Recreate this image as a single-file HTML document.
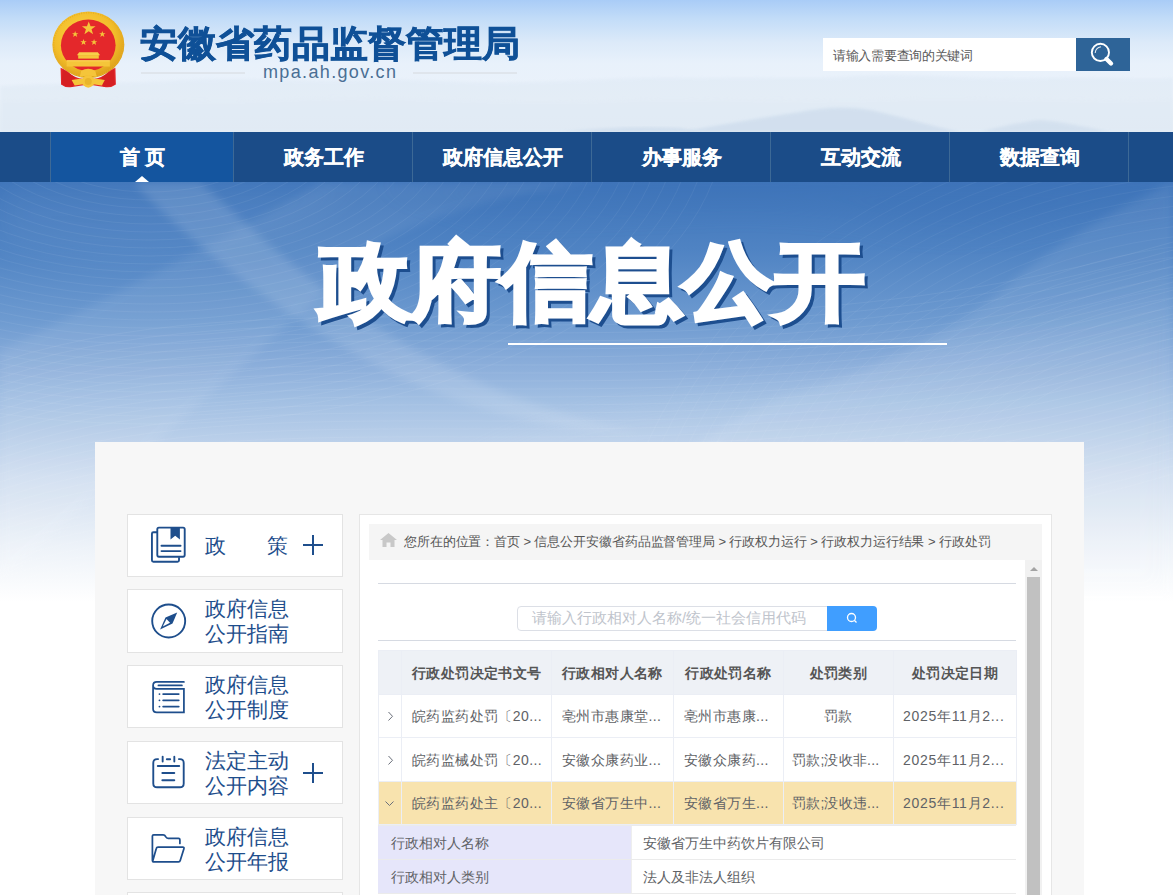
<!DOCTYPE html>
<html><head><meta charset="utf-8">
<style>
*{margin:0;padding:0;box-sizing:border-box;}
html,body{width:1173px;height:895px;overflow:hidden;font-family:"Liberation Sans",sans-serif;}
body{position:relative;background:#fff;}
.abs{position:absolute;}
#header{left:0;top:0;width:1173px;height:132px;background:linear-gradient(180deg,#a9ccf7 0%,#c2dcf8 14%,#dceaf9 32%,#e8f1fb 48%,#ebf2fa 75%,#e8f0f8 100%);overflow:hidden;}
#title{left:140px;top:19px;font-size:38px;font-weight:bold;color:#0f5097;-webkit-text-stroke:0.8px #0f5097;transform-origin:0 0;transform:scaleY(0.95);white-space:nowrap;line-height:52px;}
#domain{left:263px;top:61px;font-size:18px;color:#4a6f94;letter-spacing:1.35px;line-height:22px;}
.hl{position:absolute;top:72px;height:2px;background:#dfe5ec;}
#search{left:823px;top:38px;width:253px;height:33px;background:#fff;font-size:13px;color:#5a5a5a;line-height:35px;padding-left:10px;letter-spacing:-0.3px;}
#sbtn{left:1076px;top:38px;width:54px;height:33px;background:#2e6498;}
#nav{left:0;top:132px;width:1173px;height:50px;background:#1b4c88;}
.nv{position:absolute;top:0;width:179px;height:50px;line-height:50px;text-align:center;color:#fff;font-weight:bold;font-size:20px;-webkit-text-stroke:0.3px #fff;padding-left:2px;}
.dv{position:absolute;top:0;width:1px;height:50px;background:#3d6996;}
#banner{left:0;top:182px;width:1173px;height:420px;overflow:hidden;}
#bigtitle,#bigshadow{left:319px;top:227px;font-size:85px;font-weight:bold;color:#fff;-webkit-text-stroke:3.5px #fff;white-space:nowrap;line-height:110px;transform-origin:0 0;transform:scaleX(1.07);}
#bigshadow{color:#1d4e8f;-webkit-text-stroke:3.5px #1d4e8f;transform:translate(3px,3px) scaleX(1.07);}
#bline{left:508px;top:343px;width:439px;height:2px;background:#fff;}
#content{left:95px;top:442px;width:989px;height:453px;background:#f7f7f7;}
.side{position:absolute;left:127px;width:216px;height:63px;background:#fff;border:1px solid #e3e3e3;color:#1e4e8c;font-size:21px;line-height:25px;}
.side svg{position:absolute;left:12px;top:0;}
.side .t{position:absolute;left:77px;white-space:nowrap;}
.side .plus{position:absolute;left:175px;width:20px;height:20px;}
.side .plus:before{content:"";position:absolute;left:0;top:9px;width:20px;height:2px;background:#1e4e8c;}
.side .plus:after{content:"";position:absolute;left:9px;top:0;width:2px;height:20px;background:#1e4e8c;}
#panel{left:359px;top:514px;width:693px;height:381px;background:#fff;border:1px solid #e6e6e6;border-bottom:none;}
#crumb{left:369px;top:524px;width:673px;height:36px;background:#f5f5f5;font-size:13px;color:#555;line-height:36px;white-space:nowrap;letter-spacing:-0.11px;}
#scroll{left:1025px;top:560px;width:17px;height:335px;background:#f1f1f1;}
#thumb{left:1027px;top:577px;width:13px;height:318px;background:#c1c1c1;}
.hr{position:absolute;left:378px;width:638px;height:1px;background:#d6dae2;}
#sinput{left:517px;top:606px;width:311px;height:25px;border:1px solid #dcdfe6;border-radius:4px 0 0 4px;font-size:14.5px;color:#c0c4cc;line-height:23px;padding-left:14px;white-space:nowrap;}
#sgo{left:827px;top:606px;width:50px;height:25px;background:#409eff;border-radius:0 4px 4px 0;}
table{position:absolute;left:378px;top:650px;border-collapse:collapse;table-layout:fixed;width:638px;font-size:14px;color:#606266;}
td,th{border:1px solid #ebeef5;height:43px;white-space:nowrap;overflow:hidden;padding:0 10px;}
th{height:44px;padding-top:3px;}
tr.r1 td{height:43px;} tr.r2 td{height:44px;} tr.r3 td{height:43px;}
td{padding-top:2px;letter-spacing:0.4px;}
td.d{letter-spacing:0.7px;padding-left:9px;}
td.k{letter-spacing:0.2px;padding-left:8px;}
th{background:#eef1f6;color:#555;font-weight:bold;text-align:center;letter-spacing:0.4px;}
tr.hi td{background:#f8e3ae;}
td.c{text-align:center;}
td.arr{padding:0;text-align:center;color:#888;}
.det{position:absolute;left:378px;width:638px;height:34px;font-size:14px;color:#606266;line-height:35px;border-top:1px solid #ebebeb;background:#fff;}
.det .l{position:absolute;left:0;top:0;width:254px;height:33px;background:#e6e6fa;padding-left:13px;border-right:1px solid #eeeeee;}
.det .v{position:absolute;left:254px;top:0;width:384px;height:33px;padding-left:11px;}
</style></head>
<body>
<div id="header" class="abs"><svg width="1173" height="132" viewBox="0 0 1173 132" style="position:absolute;left:0;top:0">
<defs><filter id="mb"><feGaussianBlur stdDeviation="1.5"/></filter></defs>
<path d="M0 86 C60 82 120 84 180 80 C240 77 300 82 360 80 C420 78 470 84 520 82 C600 80 640 76 700 78 C760 76 800 80 860 76 C920 73 980 80 1040 78 C1100 76 1140 80 1173 78 L1173 132 L0 132 Z" fill="#d3e1ef" opacity="0.28" filter="url(#mb)"/>
<path d="M0 100 C100 96 200 104 300 98 C400 94 500 104 600 100 C700 96 800 102 900 98 C1000 96 1100 102 1173 98 L1173 132 L0 132 Z" fill="#dfe9f4" opacity="0.25" filter="url(#mb)"/>
<path d="M680 132 C720 125 760 118 800 112 C820 108 845 106 870 110 C900 116 930 126 960 132 Z" fill="#cddcec" opacity="0.75" filter="url(#mb)"/>
<path d="M980 132 C1000 127 1020 122 1040 120 C1060 121 1090 128 1110 132 Z" fill="#cddcec" opacity="0.65" filter="url(#mb)"/>
<path d="M560 132 C600 128 640 126 680 128 L700 132 Z" fill="#c8d8ea" opacity="0.6" filter="url(#mb)"/>
</svg></div>
<svg class="abs" style="left:45px;top:5px" width="90" height="90" viewBox="0 0 895 895">
  <defs>
   <radialGradient id="gold" cx="0.45" cy="0.4" r="0.6"><stop offset="0" stop-color="#ffd84a"/><stop offset="0.7" stop-color="#f2bd2a"/><stop offset="1" stop-color="#dca01c"/></radialGradient>
  </defs>
  <ellipse cx="431" cy="395" rx="358" ry="330" fill="url(#gold)"/>
  <ellipse cx="431" cy="395" rx="345" ry="318" fill="none" stroke="#e8ae22" stroke-width="14" stroke-dasharray="10 14"/>
  <ellipse cx="430" cy="400" rx="272" ry="255" fill="#e4282b"/>
  <polygon points="435,165 453,212 503,212 463,242 478,292 435,262 392,292 407,242 367,212 417,212" fill="#f5c53a"/>
  <polygon points="300,258 308,280 332,280 313,294 320,318 300,304 280,318 287,294 268,280 292,280" fill="#f5c53a"/>
  <polygon points="570,258 578,280 602,280 583,294 590,318 570,304 550,318 557,294 538,280 562,280" fill="#f5c53a"/>
  <polygon points="383,338 391,360 415,360 396,374 403,398 383,384 363,398 370,374 351,360 375,360" fill="#f5c53a"/>
  <polygon points="488,338 496,360 520,360 501,374 508,398 488,384 468,398 475,374 456,360 480,360" fill="#f5c53a"/>
  <path d="M340 470 H525 L548 500 H318 Z" fill="#f7cf4a"/>
  <rect x="330" y="498" width="205" height="35" fill="#f5c53a"/>
  <rect x="215" y="550" width="430" height="62" fill="#f5c53a"/>
  <rect x="215" y="550" width="430" height="10" fill="#fbd75a"/>
  <path d="M155 625 Q200 640 260 690 Q330 740 430 735 Q530 740 600 690 Q660 640 700 625 L705 790 Q650 830 590 815 L430 790 L270 815 Q210 830 160 790 Z" fill="#e4282b"/>
  <path d="M175 640 Q240 680 300 720 L280 810 Q220 820 165 790 Z" fill="#d51f22"/>
  <path d="M685 640 Q620 680 560 720 L580 810 Q640 820 695 790 Z" fill="#d51f22"/>
  <path d="M360 655 Q430 615 500 655 L515 715 Q430 690 345 715 Z" fill="#f5c53a"/>
  <path d="M265 745 Q430 710 595 745 L565 800 Q430 770 295 800 Z" fill="#f5c53a"/>
  <circle cx="430" cy="760" r="62" fill="#f5c53a"/>
  <circle cx="430" cy="760" r="35" fill="#e9b52a"/>
</svg>
<div id="title" class="abs">安徽省药品监督管理局</div>
<div class="hl" style="left:141px;width:104px;"></div>
<div class="hl" style="left:413px;width:104px;"></div>
<div id="domain" class="abs">mpa.ah.gov.cn</div>
<div id="search" class="abs">请输入需要查询的关键词</div>
<div id="sbtn" class="abs"><svg width="54" height="33" viewBox="0 0 54 33"><circle cx="24.4" cy="14.4" r="8.6" fill="none" stroke="#fff" stroke-width="1.9"/><path d="M19.2 15 Q19.5 9.8 25 8.8" fill="none" stroke="#fff" stroke-width="1.1" opacity=".85"/><line x1="30.5" y1="21" x2="35" y2="25.5" stroke="#fff" stroke-width="4.4" stroke-linecap="round"/></svg></div>
<div id="nav" class="abs">
  <div class="nv" style="left:50px;width:183px;background:#14559f;">首 页</div>
  <div class="nv" style="left:233px;">政务工作</div>
  <div class="nv" style="left:412px;">政府信息公开</div>
  <div class="nv" style="left:591px;">办事服务</div>
  <div class="nv" style="left:770px;">互动交流</div>
  <div class="nv" style="left:949px;">数据查询</div>
  <div class="dv" style="left:50px"></div><div class="dv" style="left:233px"></div><div class="dv" style="left:412px"></div><div class="dv" style="left:591px"></div><div class="dv" style="left:770px"></div><div class="dv" style="left:949px"></div><div class="dv" style="left:1128px"></div>
</div>
<div id="banner" class="abs"><svg width="1173" height="420" viewBox="0 0 1173 420" style="position:absolute;left:0;top:0">
<defs>
<linearGradient id="bg" x1="0" y1="0" x2="0" y2="1">
<stop offset="0" stop-color="#3f75ba"/><stop offset="0.16" stop-color="#4f83c3"/><stop offset="0.326" stop-color="#6d9ad0"/><stop offset="0.42" stop-color="#87abd9"/><stop offset="0.524" stop-color="#a3c0e3"/><stop offset="0.7" stop-color="#d0def0"/><stop offset="0.874" stop-color="#eef3f9"/><stop offset="1" stop-color="#ffffff"/>
</linearGradient>
<filter id="bl" x="-20%" y="-50%" width="140%" height="200%"><feGaussianBlur stdDeviation="14"/></filter>
<filter id="bl2" x="-20%" y="-50%" width="140%" height="200%"><feGaussianBlur stdDeviation="4"/></filter>
</defs>
<rect width="1173" height="420" fill="url(#bg)"/>
<path d="M0 0 H360 C300 60 150 100 0 60 Z" fill="#ffffff" opacity="0.04" filter="url(#bl)"/>
<path d="M0 169 C100 120 200 70 323 0 L600 0 C500 10 420 40 380 60 L0 400 Z" fill="#ffffff" opacity="0.07" filter="url(#bl2)"/>
<path d="M133 0 L200 0 C260 55 330 120 410 165 C490 210 560 235 640 250 C560 250 470 230 390 190 C290 140 200 70 133 0 Z" fill="#ffffff" opacity="0.12" filter="url(#bl2)"/>
<path d="M780 215 C850 200 946 154 1000 110 C1040 75 1082 44 1173 0 V420 H500 C600 330 700 250 780 215 Z" fill="#ffffff" opacity="0.08" filter="url(#bl2)"/>
<path d="M600 230 C800 200 900 180 1000 150 C1080 130 1130 122 1173 110 V420 H300 C400 300 500 250 600 230 Z" fill="#ffffff" opacity="0.05" filter="url(#bl)"/>
<g fill="none" stroke="#ffffff" stroke-width="0.8" opacity="0.07"><ellipse cx="150" cy="-60" rx="133" ry="70"/><ellipse cx="150" cy="-60" rx="148" ry="78"/><ellipse cx="150" cy="-60" rx="163" ry="86"/><ellipse cx="150" cy="-60" rx="179" ry="94"/><ellipse cx="150" cy="-60" rx="194" ry="102"/><ellipse cx="150" cy="-60" rx="209" ry="110"/><ellipse cx="150" cy="-60" rx="224" ry="118"/><ellipse cx="150" cy="-60" rx="239" ry="126"/><ellipse cx="150" cy="-60" rx="255" ry="134"/><ellipse cx="150" cy="-60" rx="270" ry="142"/><ellipse cx="150" cy="-60" rx="285" ry="150"/><ellipse cx="150" cy="-60" rx="300" ry="158"/><ellipse cx="150" cy="-60" rx="315" ry="166"/><ellipse cx="150" cy="-60" rx="331" ry="174"/><ellipse cx="150" cy="-60" rx="346" ry="182"/><ellipse cx="150" cy="-60" rx="361" ry="190"/><ellipse cx="150" cy="-60" rx="376" ry="198"/><ellipse cx="150" cy="-60" rx="391" ry="206"/><ellipse cx="150" cy="-60" rx="407" ry="214"/><ellipse cx="150" cy="-60" rx="422" ry="222"/><ellipse cx="150" cy="-60" rx="437" ry="230"/><ellipse cx="150" cy="-60" rx="452" ry="238"/><ellipse cx="150" cy="-60" rx="467" ry="246"/><ellipse cx="150" cy="-60" rx="483" ry="254"/><ellipse cx="150" cy="-60" rx="498" ry="262"/><ellipse cx="150" cy="-60" rx="513" ry="270"/><ellipse cx="150" cy="-60" rx="528" ry="278"/><ellipse cx="150" cy="-60" rx="543" ry="286"/><ellipse cx="150" cy="-60" rx="559" ry="294"/><ellipse cx="150" cy="-60" rx="574" ry="302"/></g><g fill="none" stroke="#ffffff" stroke-width="0.8" opacity="0.08"><path d="M0 180 C300 80 700 200 1173 60"/><path d="M0 188 C300 88 700 208 1173 68"/><path d="M0 196 C300 96 700 216 1173 76"/><path d="M0 204 C300 104 700 224 1173 84"/><path d="M0 212 C300 112 700 232 1173 92"/><path d="M0 220 C300 120 700 240 1173 100"/><path d="M0 228 C300 128 700 248 1173 108"/><path d="M0 236 C300 136 700 256 1173 116"/><path d="M0 244 C300 144 700 264 1173 124"/><path d="M0 252 C300 152 700 272 1173 132"/><path d="M0 260 C300 160 700 280 1173 140"/><path d="M0 268 C300 168 700 288 1173 148"/><path d="M0 276 C300 176 700 296 1173 156"/><path d="M0 284 C300 184 700 304 1173 164"/><path d="M0 292 C300 192 700 312 1173 172"/><path d="M0 300 C300 200 700 320 1173 180"/><path d="M0 308 C300 208 700 328 1173 188"/><path d="M0 316 C300 216 700 336 1173 196"/><path d="M0 324 C300 224 700 344 1173 204"/><path d="M0 332 C300 232 700 352 1173 212"/><path d="M0 340 C300 240 700 360 1173 220"/><path d="M0 348 C300 248 700 368 1173 228"/><path d="M0 356 C300 256 700 376 1173 236"/><path d="M0 364 C300 264 700 384 1173 244"/><path d="M0 372 C300 272 700 392 1173 252"/><path d="M0 380 C300 280 700 400 1173 260"/><path d="M0 388 C300 288 700 408 1173 268"/><path d="M0 396 C300 296 700 416 1173 276"/><path d="M0 404 C300 304 700 424 1173 284"/><path d="M0 412 C300 312 700 432 1173 292"/></g><g fill="none" stroke="#ffffff" stroke-width="0.8" opacity="0.06"><ellipse cx="1250" cy="420" rx="338" ry="260"/><ellipse cx="1250" cy="420" rx="351" ry="270"/><ellipse cx="1250" cy="420" rx="364" ry="280"/><ellipse cx="1250" cy="420" rx="377" ry="290"/><ellipse cx="1250" cy="420" rx="390" ry="300"/><ellipse cx="1250" cy="420" rx="403" ry="310"/><ellipse cx="1250" cy="420" rx="416" ry="320"/><ellipse cx="1250" cy="420" rx="429" ry="330"/><ellipse cx="1250" cy="420" rx="442" ry="340"/><ellipse cx="1250" cy="420" rx="455" ry="350"/><ellipse cx="1250" cy="420" rx="468" ry="360"/><ellipse cx="1250" cy="420" rx="481" ry="370"/><ellipse cx="1250" cy="420" rx="494" ry="380"/><ellipse cx="1250" cy="420" rx="507" ry="390"/><ellipse cx="1250" cy="420" rx="520" ry="400"/><ellipse cx="1250" cy="420" rx="533" ry="410"/><ellipse cx="1250" cy="420" rx="546" ry="420"/><ellipse cx="1250" cy="420" rx="559" ry="430"/><ellipse cx="1250" cy="420" rx="572" ry="440"/><ellipse cx="1250" cy="420" rx="585" ry="450"/><ellipse cx="1250" cy="420" rx="598" ry="460"/><ellipse cx="1250" cy="420" rx="611" ry="470"/><ellipse cx="1250" cy="420" rx="624" ry="480"/><ellipse cx="1250" cy="420" rx="637" ry="490"/></g>
<path d="M380 0 H1173 V20 C1050 40 950 60 880 40 C760 10 600 40 480 30 Z" fill="#2e64ab" opacity="0.12" filter="url(#bl)"/>
</svg></div>
<div class="abs" style="left:135px;top:176px;width:0;height:0;border-left:7px solid transparent;border-right:7px solid transparent;border-bottom:6px solid #fff;"></div>
<div id="bigshadow" class="abs">政府信息公开</div><div id="bigtitle" class="abs">政府信息公开</div>
<div id="bline" class="abs"></div>
<div id="content" class="abs"></div>
<!-- SIDEBAR -->
<div class="side" style="top:514px;">
  <svg width="60" height="60" viewBox="0 0 895 895" style="left:12px;top:0px;">
    <path d="M255 258 H200 Q178 258 178 280 V675 Q178 697 200 697 H560 Q582 697 582 675 V630" fill="none" stroke="#1e4e8c" stroke-width="28"/>
    <rect x="258" y="188" width="409" height="434" rx="24" fill="none" stroke="#1e4e8c" stroke-width="28"/>
    <polygon points="455,185 595,185 595,365 525,308 455,365" fill="#1e4e8c"/>
    <line x1="320" y1="458" x2="605" y2="458" stroke="#1e4e8c" stroke-width="28" stroke-linecap="round"/>
    <line x1="320" y1="538" x2="605" y2="538" stroke="#1e4e8c" stroke-width="28" stroke-linecap="round"/>
  </svg>
  <div class="t" style="top:18px;">政</div><div class="t" style="left:139px;top:18px;">策</div>
  <div class="plus" style="top:20px;"></div>
</div>
<div class="side" style="top:589px;height:64px;">
  <svg width="60" height="60" viewBox="0 0 895 895" style="left:12px;top:0px;">
    <circle cx="428" cy="462" r="246" fill="none" stroke="#1e4e8c" stroke-width="28"/>
    <polygon points="555,335 380,410 300,590 485,500" fill="#1e4e8c"/>
    <polygon points="395,432 340,545 448,490" fill="#fff"/>
  </svg>
  <div class="t" style="top:6px;">政府信息<br>公开指南</div>
</div>
<div class="side" style="top:665px;">
  <svg width="60" height="60" viewBox="0 0 895 895" style="left:12px;top:0px;">
    <path d="M655 238 H250 C215 238 195 262 195 290 C195 318 215 340 250 340 H655 V690 H250 C215 690 195 668 195 640 V290" fill="none" stroke="#1e4e8c" stroke-width="26" stroke-linecap="round"/>
    <line x1="275" y1="290" x2="625" y2="290" stroke="#1e4e8c" stroke-width="26" stroke-linecap="round"/>
    <g stroke="#1e4e8c" stroke-width="26" stroke-linecap="round"><line x1="290" y1="418" x2="291" y2="418"/><line x1="290" y1="512" x2="291" y2="512"/><line x1="290" y1="605" x2="291" y2="605"/><line x1="345" y1="418" x2="578" y2="418"/><line x1="345" y1="512" x2="578" y2="512"/><line x1="345" y1="605" x2="578" y2="605"/></g>
  </svg>
  <div class="t" style="top:6px;">政府信息<br>公开制度</div>
</div>
<div class="side" style="top:741px;">
  <svg width="60" height="60" viewBox="0 0 895 895" style="left:12px;top:0px;">
    <g fill="none" stroke="#1e4e8c" stroke-width="28" stroke-linecap="round">
    <path d="M270 255 H255 Q198 255 198 312 V618 Q198 675 255 675 H595 Q652 675 652 618 V312 Q652 255 595 255 H580"/>
    <line x1="338" y1="220" x2="338" y2="290"/><line x1="512" y1="220" x2="512" y2="290"/><line x1="400" y1="258" x2="450" y2="258"/>
    <line x1="265" y1="358" x2="585" y2="358"/><line x1="333" y1="463" x2="512" y2="463"/><line x1="333" y1="570" x2="512" y2="570"/>
    </g>
  </svg>
  <div class="t" style="top:6px;">法定主动<br>公开内容</div>
  <div class="plus" style="top:21px;"></div>
</div>
<div class="side" style="top:817px;">
  <svg width="60" height="60" viewBox="0 0 895 895" style="left:12px;top:0px;">
    <path d="M595 380 V325 Q595 305 575 305 H420 Q395 305 380 275 Q370 250 345 250 H205 Q185 250 185 270 V630 Q185 655 210 655 H575 Q595 655 600 635 L655 458 Q662 435 638 435 H268 Q248 435 243 455 L190 640" fill="none" stroke="#1e4e8c" stroke-width="26" stroke-linecap="round" stroke-linejoin="round"/>
  </svg>
  <div class="t" style="top:6px;">政府信息<br>公开年报</div>
</div>
<div class="side" style="top:892px;"></div>
<!-- PANEL -->
<div id="panel" class="abs"></div>
<div id="crumb" class="abs"><svg style="position:absolute;left:11px;top:9px" width="17" height="14" viewBox="0 0 17 14"><path d="M8.5 0 L17 7 H14.5 V14 H10.5 V9.5 H6.5 V14 H2.5 V7 H0 Z" fill="#c8c8c8"/></svg><span style="position:absolute;left:35px;top:0">您所在的位置：首页 &gt; 信息公开安徽省药品监督管理局 &gt; 行政权力运行 &gt; 行政权力运行结果 &gt; 行政处罚</span></div>
<div id="scroll" class="abs"><div style="position:absolute;left:5px;top:7px;width:0;height:0;border-left:4px solid transparent;border-right:4px solid transparent;border-bottom:4px solid #a3a3a3;"></div></div>
<div id="thumb" class="abs"></div>
<div class="hr" style="top:583px;"></div>
<div id="sinput" class="abs">请输入行政相对人名称/统一社会信用代码</div>
<div id="sgo" class="abs"><svg width="50" height="25" viewBox="0 0 50 25"><circle cx="24.5" cy="11.5" r="4" fill="none" stroke="#fff" stroke-width="1.3"/><line x1="27.5" y1="14.5" x2="29.5" y2="16.5" stroke="#fff" stroke-width="1.3"/></svg></div>
<div class="hr" style="top:640px;"></div>
<table>
<colgroup><col style="width:23px"><col style="width:150px"><col style="width:122px"><col style="width:110px"><col style="width:110px"><col style="width:123px"></colgroup>
<tr><th></th><th>行政处罚决定书文号</th><th>行政相对人名称</th><th>行政处罚名称</th><th>处罚类别</th><th>处罚决定日期</th></tr>
<tr class="r1"><td class="arr"><svg width="23" height="16" viewBox="0 13.5 23 16" style="display:block"><path d="M9.5 17.5 L13.5 21.8 L9.5 26" fill="none" stroke="#6a6f7a" stroke-width="1"/></svg></td><td>皖药监药处罚〔20...</td><td>亳州市惠康堂...</td><td>亳州市惠康...</td><td class="c">罚款</td><td class="d">2025年11月2...</td></tr>
<tr class="r2"><td class="arr"><svg width="23" height="16" viewBox="0 13.5 23 16" style="display:block"><path d="M9.5 17.5 L13.5 21.8 L9.5 26" fill="none" stroke="#6a6f7a" stroke-width="1"/></svg></td><td>皖药监械处罚〔20...</td><td>安徽众康药业...</td><td>安徽众康药...</td><td class="k">罚款;没收非...</td><td class="d">2025年11月2...</td></tr>
<tr class="hi r3"><td class="arr"><svg width="23" height="16" viewBox="0 13.5 23 16" style="display:block"><path d="M6.5 20 L10.5 24 L14.5 20" fill="none" stroke="#6a6f7a" stroke-width="1"/></svg></td><td>皖药监药处主〔20...</td><td>安徽省万生中...</td><td>安徽省万生...</td><td class="k">罚款;没收违...</td><td class="d">2025年11月2...</td></tr>
</table>
<div class="det" style="top:825px;"><div class="l">行政相对人名称</div><div class="v">安徽省万生中药饮片有限公司</div></div>
<div class="det" style="top:859px;height:35px;border-bottom:1px solid #ebebeb;"><div class="l">行政相对人类别</div><div class="v">法人及非法人组织</div></div>
</body></html>
